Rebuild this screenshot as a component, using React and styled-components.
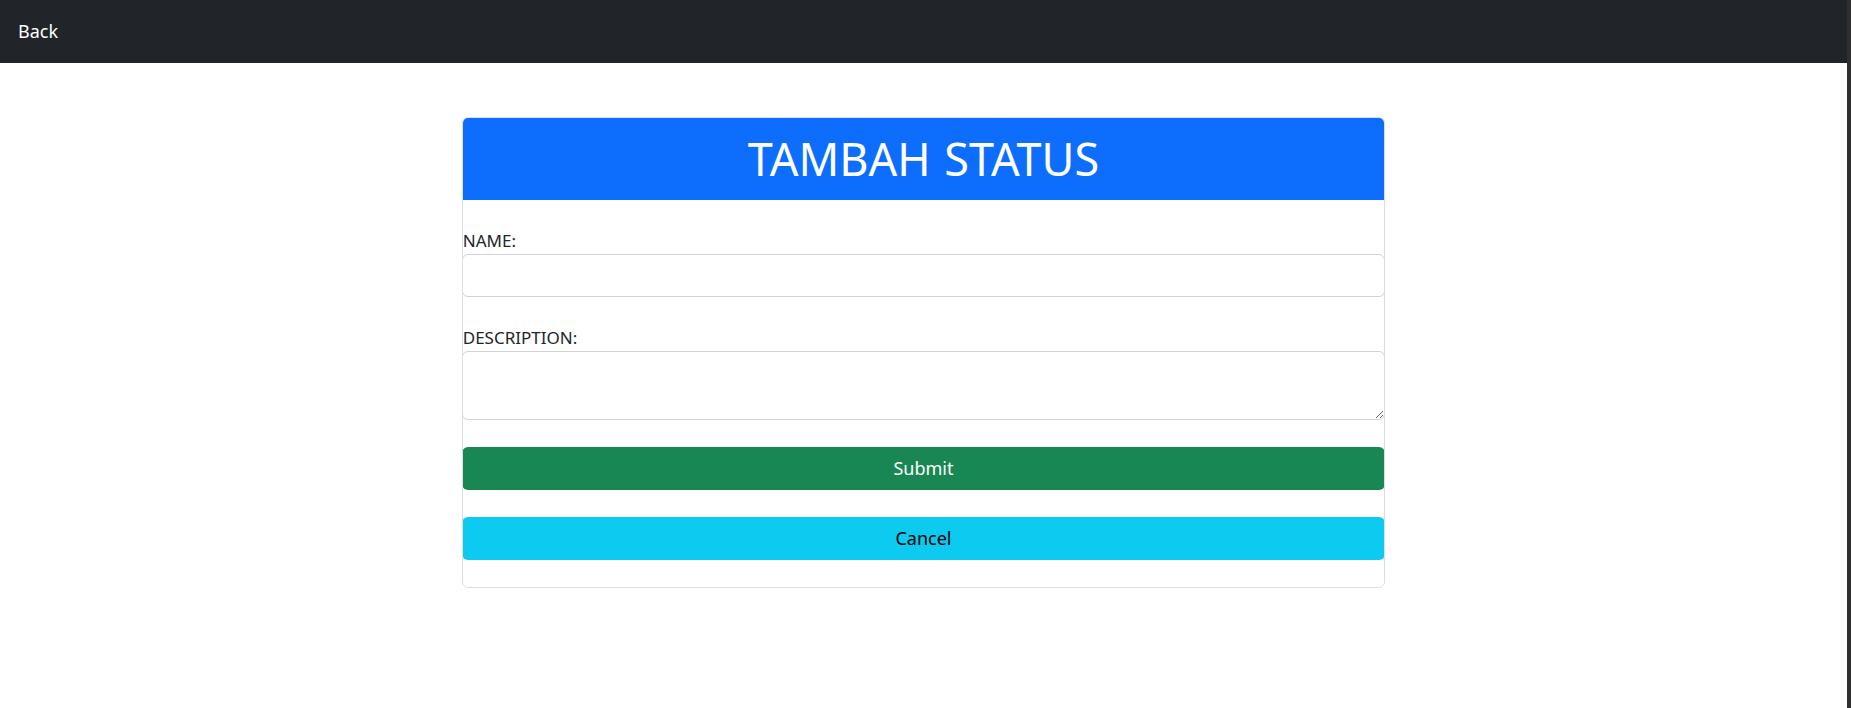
import React from "react";
import styled, { createGlobalStyle } from "styled-components";

const GlobalStyle = createGlobalStyle`
  body {
    margin: 0;
    background: #fff;
    color: #212529;
    font-family: "Segoe UI", "Noto Sans", "Open Sans", sans-serif;
    font-size: 18px;
    line-height: 1.5;
  }
  * {
    box-sizing: border-box;
  }
`;

const Page = styled.div`
  min-height: 100vh;
  border-right: 4px solid #2f2f2f;
`;

const Navbar = styled.nav`
  height: 63px;
  background: #212529;
  display: flex;
  align-items: center;
  padding: 0 18px;
`;

const NavLink = styled.a`
  color: #fff;
  text-decoration: none;
  font-size: 18px;
`;

const Card = styled.form`
  width: 50%;
  margin: 54px auto 0;
  border: 1px solid rgba(0, 0, 0, 0.13);
  border-radius: 6px;
  overflow: hidden;
  padding-bottom: 27px;
  display: flex;
  flex-direction: column;
`;

const Header = styled.div`
  height: 82px;
  background: #0d6efd;
  color: #fff;
  display: flex;
  align-items: center;
  justify-content: center;
`;

const Title = styled.h1`
  margin: 0;
  font-size: 45px;
  font-weight: 400;
  line-height: 1.2;
  word-spacing: 2px;
`;

const Field = styled.div`
  margin-top: 27px;
  display: flex;
  flex-direction: column;
`;

const Label = styled.label`
  font-size: 17px;
  line-height: 27px;
  color: #212529;
`;

const Input = styled.input`
  height: 43px;
  margin: 0 -1px;
  border: 1px solid #ced4da;
  border-radius: 6px;
  font: inherit;
  padding: 6px 13px;
`;

const TextArea = styled.textarea`
  height: 69px;
  margin: 0 -1px;
  border: 1px solid #ced4da;
  border-radius: 6px;
  font: inherit;
  padding: 6px 13px;
  resize: vertical;
`;

const Button = styled.button`
  margin: 27px -1px 0;
  height: 43px;
  border: none;
  border-radius: 6px;
  font: inherit;
  font-size: 18px;
  background: ${(p) => p.$bg};
  color: ${(p) => p.$color};
  cursor: pointer;
`;

export default function App() {
  return (
    <Page>
      <GlobalStyle />
      <Navbar>
        <NavLink href="#">Back</NavLink>
      </Navbar>
      <Card onSubmit={(e) => e.preventDefault()}>
        <Header>
          <Title>TAMBAH STATUS</Title>
        </Header>
        <Field>
          <Label htmlFor="name">NAME:</Label>
          <Input id="name" type="text" />
        </Field>
        <Field>
          <Label htmlFor="description">DESCRIPTION:</Label>
          <TextArea id="description" />
        </Field>
        <Button type="submit" $bg="#198754" $color="#fff">
          Submit
        </Button>
        <Button type="button" $bg="#0dcaf0" $color="#000">
          Cancel
        </Button>
      </Card>
    </Page>
  );
}
